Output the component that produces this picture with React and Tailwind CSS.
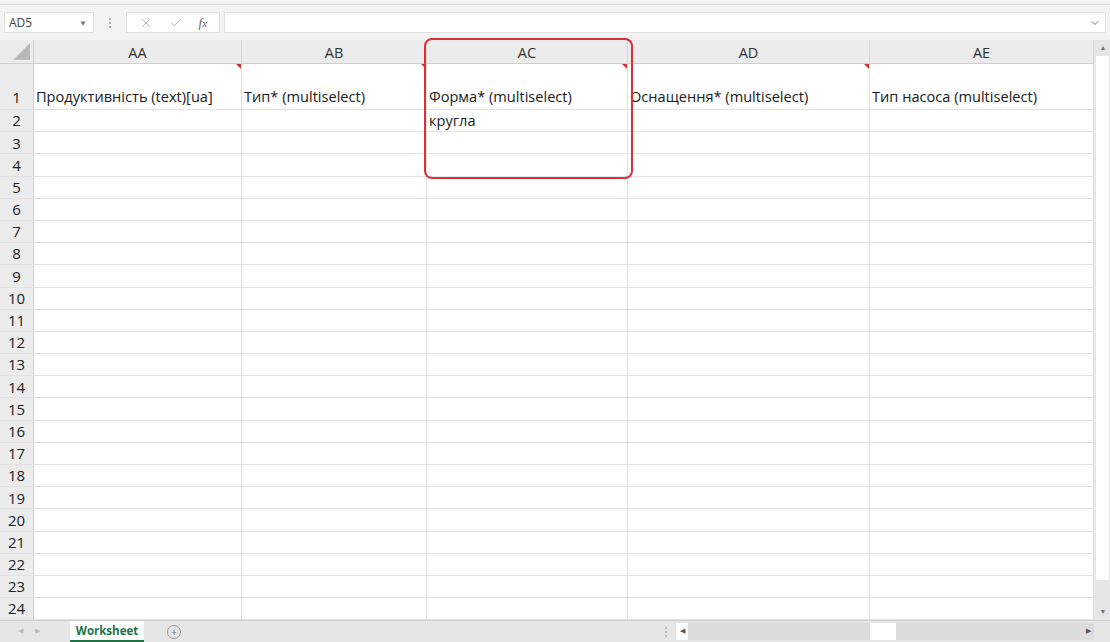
import React from "react";
import { X, Check, ChevronDown } from "lucide-react";

const columns = [
  { name: "AA", width: "w-[208px]", title: "Продуктивність (text)[ua]", note: true },
  { name: "AB", width: "w-[185px]", title: "Тип* (multiselect)", note: true },
  { name: "AC", width: "w-[201px]", title: "Форма* (multiselect)", value: "кругла", note: true },
  { name: "AD", width: "w-[242px]", title: "Оснащення* (multiselect)", note: true },
  { name: "AE", width: "w-[224px]", title: "Тип насоса (multiselect)" },
];

const rows = Array.from({ length: 23 }, (_, i) => i + 2);

// little red comment marker on the top-right corner of a cell
const NoteMark = () => (
  <span className="absolute right-0 top-0 w-0 h-0 border-t-[5px] border-l-[5px] border-t-[#d0342c] border-l-transparent" />
);

const App = () => {
  return (
    <div
      className="w-[1110px] h-[642px] bg-[#e6e6e6] flex flex-col overflow-hidden relative text-[#1a1a1a]"
      style={{ fontFamily: '"Open Sans", "Noto Sans", sans-serif' }}
    >
      {/* cut-off ribbon strip */}
      <div className="h-[5px] bg-[#f3f3f3] border-b border-[#d6d6d6] shrink-0" />

      {/* Formula bar */}
      <div className="h-[35px] bg-[#f3f3f3] flex items-center px-[4px] gap-[4px] shrink-0">
        <div className="w-[90px] h-[21px] bg-white border border-[#e2e2e2] flex items-center justify-between px-[4px] text-[12px] text-[#444]">
          <span>AD5</span>
          <span className="text-[8px] text-[#777] mr-[2px]">▼</span>
        </div>
        <div className="w-[24px] flex flex-col items-center gap-[2px]">
          <span className="w-[2px] h-[2px] bg-[#aaa]" />
          <span className="w-[2px] h-[2px] bg-[#aaa]" />
          <span className="w-[2px] h-[2px] bg-[#aaa]" />
        </div>
        <div className="w-[94px] h-[21px] bg-white border border-[#e2e2e2] flex items-center justify-around px-[4px] text-[#9a9a9a]">
          <X size={14} strokeWidth={1.3} />
          <Check size={14} strokeWidth={1.3} />
          <span className="italic text-[13px] text-[#666]" style={{ fontFamily: '"Liberation Serif", serif' }}>
            f<span className="text-[11px]">x</span>
          </span>
        </div>
        <div className="flex-1 h-[21px] bg-white border border-[#e2e2e2] flex items-center justify-end pr-[4px]">
          <ChevronDown size={12} className="text-[#777]" />
        </div>
      </div>

      {/* Grid + vertical scrollbar */}
      <div className="flex-1 flex min-h-0">
        <div className="flex-1 flex flex-col bg-white overflow-hidden">
          {/* column header */}
          <div className="h-[24px] flex shrink-0 bg-[#ececec] border-b border-[#cfcfcf]">
            <div className="w-[34px] shrink-0 border-r border-[#cfcfcf] relative">
              <span className="absolute right-[3px] bottom-[3px] w-0 h-0 border-b-[17px] border-l-[17px] border-b-[#b9b9b9] border-l-transparent" />
            </div>
            {columns.map((c) => (
              <div
                key={c.name}
                className={`${c.width} shrink-0 border-r border-[#d6d6d6] flex items-center justify-center pt-[3px] text-[14.5px] text-[#333]`}
              >
                {c.name}
              </div>
            ))}
          </div>

          {/* row 1 */}
          <div className="h-[46px] flex shrink-0 border-b border-[#e2e2e2]">
            <div className="w-[34px] shrink-0 bg-[#ececec] border-r border-[#cfcfcf] flex items-end justify-center pb-[1px] text-[15px] text-[#222]">
              1
            </div>
            {columns.map((c) => (
              <div
                key={c.name}
                className={`${c.width} shrink-0 border-r border-[#e2e2e2] relative flex items-end px-[2px] pb-[1px] text-[14.6px] whitespace-nowrap`}
              >
                {c.title}
                {c.note && <NoteMark />}
              </div>
            ))}
          </div>

          {rows.map((r) => (
            <div key={r} className="h-[22.2px] flex shrink-0 border-b border-[#e2e2e2]">
              <div className="w-[34px] shrink-0 bg-[#ececec] border-r border-[#cfcfcf] flex items-center justify-center text-[15px] text-[#222]">
                {r}
              </div>
              {columns.map((c) => (
                <div
                  key={c.name}
                  className={`${c.width} shrink-0 border-r border-[#e2e2e2] flex items-center px-[2px] text-[14.6px] whitespace-nowrap`}
                >
                  {r === 2 && c.value}
                </div>
              ))}
            </div>
          ))}
        </div>

        {/* vertical scrollbar */}
        <div className="w-[16px] shrink-0 bg-[#e6e6e6] flex flex-col pl-[2px]">
          <div className="h-[16px] flex items-center justify-center text-[7px] text-[#777]">▲</div>
          <div className="h-[524px] bg-white mr-[1px]" />
          <div className="flex-1" />
          <div className="h-[16px] flex items-center justify-center text-[7px] text-[#777]">▼</div>
        </div>
      </div>

      {/* Sheet tabs & horizontal scrollbar */}
      <div className="h-[22px] shrink-0 bg-[#e6e6e6] border-t border-[#cfcfcf] flex items-center">
        <div className="w-[66px] flex items-center gap-[12px] pl-[18px] text-[7px] text-[#bbb]">
          <span>◀</span>
          <span>▶</span>
        </div>
        <div className="h-full w-[74px] bg-white flex items-center justify-center border-b-2 border-[#217346] text-[11.5px] font-bold text-[#217346] ml-[4px]">
          Worksheet
        </div>
        <div className="ml-[23px] w-[14px] h-[14px] rounded-full border border-[#999] flex items-center justify-center text-[11px] leading-none text-[#777]">
          +
        </div>
        <div className="flex-1" />
        <div className="flex flex-col gap-[2px] mr-[9px]">
          <span className="w-[2px] h-[2px] bg-[#bbb]" />
          <span className="w-[2px] h-[2px] bg-[#bbb]" />
          <span className="w-[2px] h-[2px] bg-[#bbb]" />
        </div>
        <div className="w-[418px] h-[17px] flex items-center bg-[#dcdcdc] mr-[16px]">
          <div className="w-[12px] h-full bg-white flex items-center justify-center text-[7px] text-[#555]">◀</div>
          <div className="w-[182px]" />
          <div className="w-[26px] h-full bg-white" />
          <div className="flex-1" />
          <div className="w-[12px] h-full flex items-center justify-center text-[7px] text-[#555]">▶</div>
        </div>
      </div>

      {/* red highlight around column AC */}
      <div className="absolute left-[424px] top-[38px] w-[209px] h-[141px] border-2 border-[#d7303c] rounded-[8px] pointer-events-none" />
    </div>
  );
};

export default App;
